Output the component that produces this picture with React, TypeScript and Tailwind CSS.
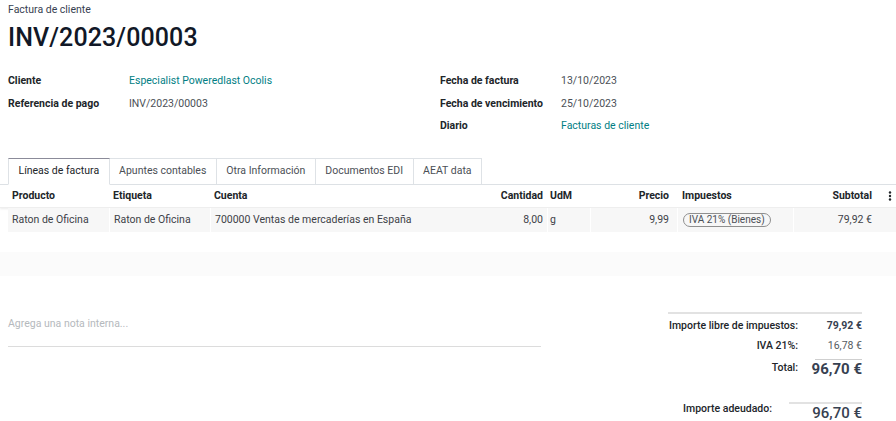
const teal = "text-[#017e84]";

function Field({ label, value, link }: { label: string; value: string; link?: boolean }) {
  return (
    <div className="flex h-[22.5px] items-center">
      <div className="w-[121px] shrink-0 font-bold text-[#212529]">{label}</div>
      <div className={link ? teal : "text-[#4b4f56]"}>{value}</div>
    </div>
  );
}

const tabs = ["Líneas de factura", "Apuntes contables", "Otra Información", "Documentos EDI", "AEAT data"];

const cols = "grid grid-cols-[101px_101px_260px_77px_43px_87px_116px_83px_20px]";

function Kebab() {
  return (
    <svg width="4" height="10" viewBox="0 0 4 10" className="text-[#212529]">
      <circle cx="2" cy="1.5" r="1.2" fill="currentColor" />
      <circle cx="2" cy="5" r="1.2" fill="currentColor" />
      <circle cx="2" cy="8.5" r="1.2" fill="currentColor" />
    </svg>
  );
}

export default function App() {
  return (
    <div className="h-[421px] w-[896px] overflow-hidden whitespace-nowrap bg-white text-[10.5px] leading-[14px] text-[#212529] [font-family:Roboto,'Liberation_Sans',sans-serif]">
      {/* title */}
      <div className="px-2 pt-[3px]">
        <div className="text-[#374151]">Factura de cliente</div>
        <h1 className="mt-[5px] text-[25px] leading-[31px] font-medium tracking-[0.1px] text-[#111827]">
          INV/2023/00003
        </h1>
      </div>

      {/* fields */}
      <div className="mt-[17px] flex px-2">
        <div className="w-[432px]">
          <Field label="Cliente" value="Especialist Poweredlast Ocolis" link />
          <Field label="Referencia de pago" value="INV/2023/00003" />
        </div>
        <div className="w-[440px]">
          <Field label="Fecha de factura" value="13/10/2023" />
          <Field label="Fecha de vencimiento" value="25/10/2023" />
          <Field label="Diario" value="Facturas de cliente" link />
        </div>
      </div>

      {/* tabs */}
      <div className="mt-[20px] flex border-b border-[#dee2e6] pl-2">
        {tabs.map((t, i) => (
          <div
            key={t}
            className={
              i === 0
                ? "-mb-px flex h-[27px] items-center border border-b-white border-[#dee2e6] border-t-[#8b8b99] bg-white px-[9.5px] text-[#212529]"
                : "flex h-[26px] items-center border border-l-0 border-b-0 border-[#dee2e6] px-[9.5px] text-[#4b4f56]"
            }
          >
            {t}
          </div>
        ))}
      </div>

      {/* table header */}
      <div className={`${cols} h-[23px] items-center border-b border-[#eeeeee] pl-2 font-bold shadow-[0_1px_2px_rgba(0,0,0,0.08)]`}>
        <div className="px-1">Producto</div>
        <div className="px-1">Etiqueta</div>
        <div className="px-1">Cuenta</div>
        <div className="px-1 text-right">Cantidad</div>
        <div className="px-[3px]">UdM</div>
        <div className="pl-1 pr-2 text-right">Precio</div>
        <div className="pl-[5px]">Impuestos</div>
        <div className="px-1 text-right">Subtotal</div>
        <div className="flex justify-end pr-[4px]">
          <Kebab />
        </div>
      </div>

      {/* data row */}
      <div className={`${cols} h-[24px] pl-2 text-[#3d4147]`}>
        <div className="flex items-center bg-[#f7f7f7] px-1">Raton de Oficina</div>
        <div className="flex items-center border-l border-white bg-[#f7f7f7] px-1">Raton de Oficina</div>
        <div className="flex items-center border-l border-white bg-[#f7f7f7] px-1">700000 Ventas de mercaderías en España</div>
        <div className="flex items-center justify-end bg-[#f7f7f7] px-1">8,00</div>
        <div className="flex items-center border-l border-white bg-[#f7f7f7] px-[2px]">g</div>
        <div className="flex items-center justify-end border-l border-white bg-[#f7f7f7] pl-1 pr-2">9,99</div>
        <div className="flex items-center border-l border-white bg-[#f7f7f7] pl-[5px]">
          <span className="rounded-full border border-[#8f8f8f] px-[5px] text-[10px] leading-[12px] text-[#4b4f56]">
            IVA 21% (Bienes)
          </span>
        </div>
        <div className="flex items-center justify-end border-l border-white bg-[#f7f7f7] px-1">79,92 €</div>
        <div className="bg-[#f7f7f7]" />
      </div>

      {/* empty row */}
      <div className="mt-[20px] h-[24px] bg-[#fbfbfb]" />

      {/* note + totals */}
      <div className="mt-[36px] flex pl-2">
        <div className="w-[533px] pt-[5px]">
          <div className="border-b border-[#dcdcdc] pb-[15px] text-[#b5b9bd]">Agrega una nota interna...</div>
        </div>
        <div className="ml-[127px] w-[194px]">
          <div className="grid grid-cols-[130px_17px_47px] border-t-2 border-[#e2e2e2] font-medium">
            <div className="h-[20px] pt-[5px] text-right">Importe libre de impuestos:</div>
            <div />
            <div className="h-[20px] pt-[5px] text-right font-bold text-[#374151]">79,92 €</div>
            <div className="h-[20px] pt-[5px] text-right">IVA 21%:</div>
            <div />
            <div className="h-[20px] pt-[5px] text-right font-normal text-[#555b61]">16,78 €</div>
            <div className="mt-[5px] pt-[2px] text-right">Total:</div>
            <div className="mt-[5px]" />
            <div className="mt-[5px] flex justify-end border-t border-[#cfcfcf] text-[15px] leading-[18px] font-bold text-[#374151]">
              96,70 €
            </div>
          </div>
          <div className="mt-[24px] flex items-start">
            <div className="w-[104px] text-right font-medium">Importe adeudado:</div>
            <div className="ml-[17px] w-[73px] border-t-2 border-[#e2e2e2] text-right text-[15px] leading-[18px] font-medium text-[#374151]">
              96,70 €
            </div>
          </div>
        </div>
      </div>
    </div>
  );
}
